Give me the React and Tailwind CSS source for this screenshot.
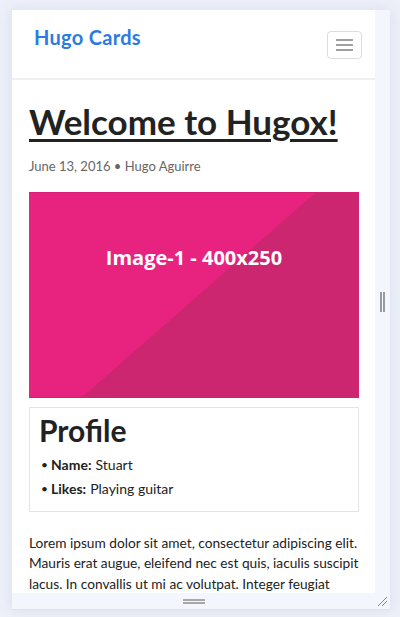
import React from 'react';

const font = { fontFamily: 'Lato, "Open Sans", sans-serif' };

const Header = () => (
  <div className="h-[70px] border-b-2 border-[#f0f0f0] flex items-start justify-between pl-[22px] pr-[13px]">
    <a className="mt-[15px] text-[20px] tracking-[0.3px] font-bold text-[#2c7be5] leading-[24px]">Hugo Cards</a>
    <button className="mt-[21px] w-[35px] h-[28px] border border-[#dcdcdc] rounded-[4px] flex flex-col items-center justify-center gap-[3px]">
      <span className="block w-[17px] h-[2px] bg-[#a0a0a0]" />
      <span className="block w-[17px] h-[2px] bg-[#a0a0a0]" />
      <span className="block w-[17px] h-[2px] bg-[#a0a0a0]" />
    </button>
  </div>
);

const Placeholder = () => (
  <div className="relative h-[206px] bg-[#e8237f] border-y border-[#d81f73] overflow-hidden">
    <svg className="absolute inset-0" width="330" height="206" viewBox="0 0 330 206">
      <polygon points="286,0 330,0 330,206 51,206" fill="#cc2671" />
    </svg>
    <div
      className="relative pt-[50px] text-center text-white text-[20px] font-bold"
      style={{ fontFamily: '"Open Sans", sans-serif' }}
    >
      Image-1 - 400x250
    </div>
  </div>
);

const Profile = () => (
  <div className="mt-[9px] border border-[#e4e4e4] px-[9px] pt-[3px] pb-[10px]">
    <h2 className="text-[30px] font-bold text-[#222] leading-[38px]">Profile</h2>
    <ul className="mt-[4px] text-[14px] text-[#222]">
      <li className="flex items-center h-[24px]">
        <span className="w-[12px] pl-[2px] text-[12px]">•</span>
        <b className="mr-[4px]">Name:</b>Stuart
      </li>
      <li className="flex items-center h-[24px]">
        <span className="w-[12px] pl-[2px] text-[12px]">•</span>
        <b className="mr-[4px]">Likes:</b>Playing guitar
      </li>
    </ul>
  </div>
);

export default function App() {
  return (
    <div className="w-[400px] h-[617px] overflow-hidden bg-[#edf0f8] pt-[10px] pl-[12px]" style={font}>
      <div className="w-[378px] h-[600px] flex flex-col border-b border-[#dbe3f2] shadow-[0_0_12px_rgba(120,140,180,0.18)]">
        <div className="flex flex-1 min-h-0">
          <div className="w-[363px] bg-white overflow-hidden">
            <Header />
            <main className="px-[17px] pr-[16px] pt-[20px]">
              <h1 className="text-[35px] font-bold text-[#222] leading-[42px] underline decoration-[3px] underline-offset-[4px]">
                Welcome to Hugox!
              </h1>
              <p className="mt-[15px] text-[13px] text-[#666]">June 13, 2016 • Hugo Aguirre</p>
              <div className="mt-[15px]">
                <Placeholder />
              </div>
              <Profile />
              <p className="mt-[21px] text-[13.7px] leading-[20.5px] text-[#222] whitespace-nowrap">
                Lorem ipsum dolor sit amet, consectetur adipiscing elit.
                <br />
                Mauris erat augue, eleifend nec est quis, iaculis suscipit
                <br />
                lacus. In convallis ut mi ac volutpat. Integer feugiat
              </p>
            </main>
          </div>
          <div className="w-[15px] bg-[#f3f6fc] flex items-center justify-center">
            <div className="flex gap-[1px]">
              <span className="block w-[2px] h-[20px] bg-[#9a9a9a]" />
              <span className="block w-[2px] h-[20px] bg-[#9a9a9a]" />
            </div>
          </div>
        </div>
        <div className="relative h-[16px] bg-[#f3f6fc] flex">
          <div className="w-[363px] flex flex-col items-center justify-center gap-[1px]">
            <span className="block w-[22px] h-[2px] bg-[#a8a8a8]" />
            <span className="block w-[22px] h-[2px] bg-[#a8a8a8]" />
          </div>
          <svg className="absolute right-[2px] bottom-[2px]" width="11" height="11" viewBox="0 0 11 11">
            <line x1="1" y1="10" x2="10" y2="1" stroke="#888" strokeWidth="1" />
            <line x1="5" y1="10" x2="10" y2="5" stroke="#888" strokeWidth="1" />
          </svg>
        </div>
      </div>
    </div>
  );
}
